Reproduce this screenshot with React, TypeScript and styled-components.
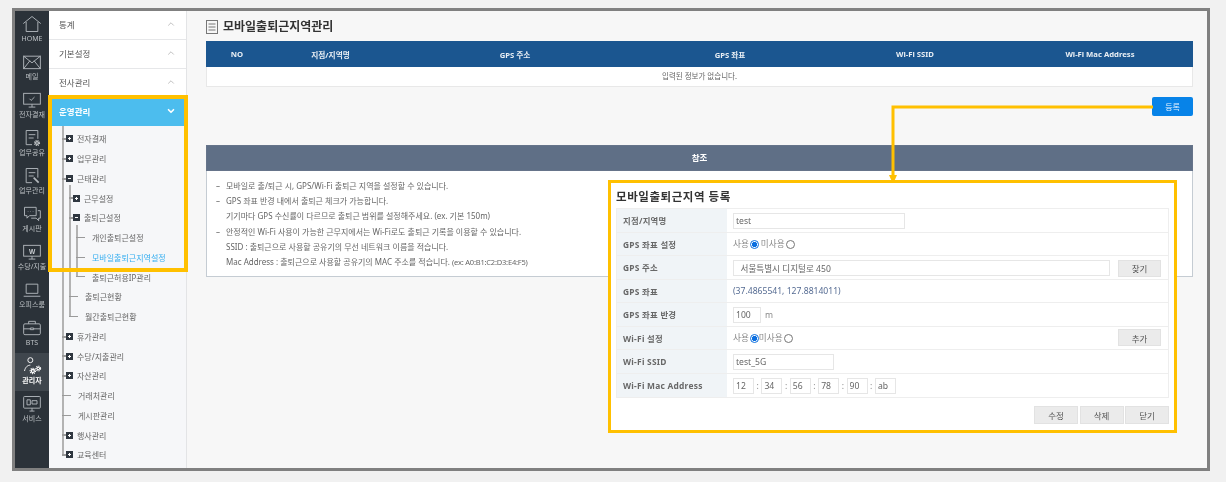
import React from 'react';
import styled, { createGlobalStyle } from 'styled-components';
import { ChevronDown, ChevronUp } from 'lucide-react';

const GlobalStyle = createGlobalStyle`
  html, body {
    margin: 0;
    padding: 0;
    background: #f1f1f1;
  }
  * {
    box-sizing: border-box;
  }
  body {
    font-family: "Noto Sans", "Noto Sans CJK KR", sans-serif;
    color: #555;
  }
`;

const Frame = styled.div`
  position: relative;
  display: flex;
  width: 1198px;
  height: 463px;
  margin: 8px 0 0 12px;
  border: 3px solid #808080;
  background: #f7f7f7;
  overflow: hidden;
  filter: blur(0.25px);
`;

const Rail = styled.nav`
  flex: 0 0 34px;
  background: #2b3239;
`;

const RailItem = styled.div<{ $active?: boolean }>`
  height: 38px;
  padding-top: 3px;
  display: flex;
  flex-direction: column;
  align-items: center;
  background: ${(props) => (props.$active ? '#3f464d' : 'transparent')};
  color: ${(props) => (props.$active ? '#ffffff' : '#bcc0c4')};
  font-size: 7px;
  line-height: 10px;
  font-weight: ${(props) => (props.$active ? 700 : 400)};
  white-space: nowrap;
  svg {
    display: block;
    width: 20px;
    height: 20px;
    fill: none;
    stroke: ${(props) => (props.$active ? '#ffffff' : '#b4b9be')};
    stroke-width: 1.1;
  }
`;

const IconLetter = styled.text`
  font: 700 8px "Liberation Sans", sans-serif;
  fill: #c8ccd0;
  stroke: none;
`;

const Sidebar = styled.aside`
  flex: 0 0 138px;
  background: #f6f7f9;
  border-right: 1px solid #e3e4e6;
`;

const Section = styled.div<{ $open?: boolean }>`
  height: ${(props) => (props.$open ? '28px' : '29px')};
  padding: 0 10px 2px 10px;
  display: flex;
  align-items: center;
  justify-content: space-between;
  font-size: 8.5px;
  font-weight: ${(props) => (props.$open ? 700 : 400)};
  color: ${(props) => (props.$open ? '#ffffff' : '#555')};
  background: ${(props) => (props.$open ? '#4cbdee' : '#ffffff')};
  border-bottom: ${(props) => (props.$open ? '0' : '1px solid #e6e7e9')};
  svg {
    color: ${(props) => (props.$open ? '#ffffff' : '#b5b5b5')};
  }
`;

const Tree = styled.ul<{ $level: number }>`
  list-style: none;
  margin: ${(props) => (props.$level === 1 ? '3px 0 0 13px' : '0 0 0 7px')};
  padding: 0;
`;

const Node = styled.li`
  position: relative;
  &::before {
    content: '';
    position: absolute;
    left: 0;
    top: -3px;
    bottom: 0;
    width: 2px;
    background: #b3b3b3;
  }
  &:last-child::before {
    bottom: auto;
    height: 13px;
  }
`;

const Row = styled.div<{ $current?: boolean; $leaf?: boolean }>`
  position: relative;
  height: 19.75px;
  display: flex;
  align-items: center;
  padding-left: ${(props) => (props.$leaf ? '16px' : '4px')};
  gap: 4px;
  font-size: 8px;
  white-space: nowrap;
  color: ${(props) => (props.$current ? '#35aef0' : '#666')};
  &::before {
    content: '';
    position: absolute;
    left: 0;
    top: 9px;
    height: ${(props) => (props.$leaf ? '1px' : '2px')};
    width: ${(props) => (props.$leaf ? '9px' : '4px')};
    background: #9a9a9a;
  }
`;

const Toggle = styled.span<{ $open?: boolean }>`
  flex: 0 0 7px;
  width: 7px;
  height: 7px;
  background-color: #2f3740;
  background-image: linear-gradient(#fff, #fff)
    ${(props) => (props.$open ? '' : ', linear-gradient(#fff, #fff)')};
  background-repeat: no-repeat;
  background-position: center;
  background-size: 3px 1px ${(props) => (props.$open ? '' : ', 1px 3px')};
`;

const Main = styled.main`
  flex: 1;
  min-width: 0;
  padding: 9px 14px 0 19px;
`;

const TitleRow = styled.div`
  display: flex;
  align-items: center;
  gap: 5px;
  height: 14px;
  margin-bottom: 7px;
`;

const PageTitle = styled.h1`
  margin: 0;
  padding-bottom: 2px;
  font-size: 12px;
  font-weight: 700;
  color: #333;
  white-space: nowrap;
`;

const TitleIcon = styled.svg`
  width: 12px;
  height: 14px;
  fill: none;
  stroke: #777;
  stroke-width: 1;
`;

const Grid = styled.div`
  display: grid;
  grid-template-columns: 62px 125px 244px 186px 184px 186px;
`;

const HeadRow = styled(Grid)`
  height: 26px;
  background: #1b5690;
  align-items: center;
  text-align: center;
  color: #e8eef4;
  font-size: 7.7px;
  font-weight: 700;
`;

const EmptyRow = styled.div`
  height: 20px;
  background: #fff;
  border: 1px solid #e8e8e8;
  border-top: 0;
  text-align: center;
  font-size: 7.5px;
  line-height: 19px;
  color: #666;
`;

const Actions = styled.div`
  display: flex;
  justify-content: flex-end;
  margin-top: 10px;
`;

const PrimaryButton = styled.button`
  width: 41px;
  height: 19px;
  padding: 0;
  border: 0;
  border-radius: 2px;
  background: #0783e8;
  color: #eaf5ff;
  font: 400 8px "Noto Sans CJK KR", sans-serif;
`;

const NoticeHead = styled.div`
  margin-top: 29px;
  height: 26px;
  background: #5f6f86;
  border: 1px solid #66748a;
  color: #fff;
  font-size: 8.5px;
  font-weight: 700;
  line-height: 23px;
  text-align: center;
`;

const NoticeBody = styled.ul`
  list-style: none;
  margin: 0;
  padding: 7px 0 0 9px;
  height: 106px;
  background: #fff;
  border: 1px solid #c5ccd3;
  border-top: 0;
  font-size: 8px;
  color: #666;
`;

const NoticeLine = styled.li<{ $first?: boolean }>`
  height: 15.2px;
  line-height: 15px;
  padding-left: 10px;
  position: relative;
  white-space: nowrap;
  &::before {
    content: ${(props) => (props.$first ? "'–'" : 'none')};
    position: absolute;
    left: 0;
  }
`;

const Hint = styled.span`
  font-size: 7.5px;
  letter-spacing: -0.2px;
`;

const Highlight = styled.div`
  position: absolute;
  left: 33px;
  top: 84px;
  width: 140px;
  height: 177px;
  border: 4px solid #ffc000;
  pointer-events: none;
`;

const Connector = styled.svg`
  position: absolute;
  left: 873px;
  top: 93px;
  width: 265px;
  height: 80px;
  overflow: visible;
`;

const Dialog = styled.section`
  position: absolute;
  left: 593px;
  top: 169px;
  width: 569px;
  height: 253px;
  padding: 0 5px;
  background: #fff;
  border: 3px solid #ffc000;
`;

const DialogTitle = styled.h2`
  margin: 0;
  height: 25px;
  font-size: 11.5px;
  line-height: 27px;
  font-weight: 700;
  letter-spacing: 0.55px;
  color: #333;
`;

const FormTable = styled.div`
  height: 190px;
  display: grid;
  grid-template-rows: repeat(8, 1fr);
  border: 1px solid #eeeeee;
`;

const FormRow = styled.div`
  display: grid;
  grid-template-columns: 110px 1fr;
  border-bottom: 1px solid #eeeeee;
  &:last-child {
    border-bottom: 0;
  }
`;

const FormLabel = styled.div`
  display: flex;
  align-items: center;
  padding-left: 6px;
  background: #f0f4f7;
  font-size: 8.4px;
  letter-spacing: 0.25px;
  font-weight: 700;
  color: #686868;
  white-space: nowrap;
`;

const FormValue = styled.div<{ $field?: boolean }>`
  display: flex;
  align-items: center;
  padding: ${(props) => (props.$field ? '2px' : '0')} 7px 0 6px;
  font-size: 8.6px;
  color: #8a8a8a;
`;

const TextInput = styled.input<{ $width: number; $blurred?: boolean }>`
  flex: 0 0 auto;
  width: ${(props) => props.$width}px;
  height: 16px;
  padding: 0 2px;
  border: 1px solid #e6e6e6;
  outline: none;
  font: 400 8.6px "Noto Sans", "Noto Sans CJK KR", sans-serif;
  color: #666;
  filter: ${(props) => (props.$blurred ? 'blur(0.6px)' : 'none')};
`;

const Radio = styled.input<{ $tight?: boolean }>`
  appearance: none;
  width: 9px;
  height: 9px;
  margin: 2px ${(props) => (props.$tight ? '0' : '2px')} 0 1px;
  border: 1px solid #767676;
  border-radius: 50%;
  background: #fff;
  &:checked {
    border-color: #0b6fe0;
    background: radial-gradient(circle, #0b6fe0 0 2.4px, #fff 2.9px);
  }
`;

const GrayButton = styled.button`
  width: 43px;
  height: 17px;
  padding: 0;
  border: 1px solid #e2e2e2;
  background: #ebebeb;
  color: #555;
  font: 400 8.5px "Noto Sans CJK KR", sans-serif;
`;

const PushRight = styled.div`
  margin-left: auto;
`;

const AddressGap = styled.div`
  flex: 1;
  display: flex;
  justify-content: flex-end;
`;

const Coordinates = styled.span`
  color: #566c93;
  filter: blur(0.7px);
`;

const Colon = styled.span`
  width: 7.4px;
  text-align: center;
`;

const DialogActions = styled.div`
  display: flex;
  justify-content: flex-end;
  gap: 1.5px;
  margin-top: 8px;
  button {
    width: 44px;
    height: 18px;
  }
`;

const Unit = styled.span`
  margin-left: 4px;
`;

function Gear({ x, y, r, color }: { x: number; y: number; r: number; color: string }) {
  return (
    <>
      <circle cx={x} cy={y} r={r} fill={color} stroke="none" />
      <circle cx={x} cy={y} r={r + 0.6} fill="none" stroke={color} strokeWidth="1.4" strokeDasharray="1.3 1.1" />
      <circle cx={x} cy={y} r={r * 0.4} fill="#2b3239" stroke="none" />
    </>
  );
}

const icons: Record<string, React.ReactNode> = {
  home: <path d="M1.5 11.5 12 3l10.5 8.5M5 9.5V21h14V9.500" />,
  mail: (
    <>
      <rect x="2" y="5" width="20" height="15" />
      <path d="m2 5 10 8 10-8M2 20l7.500-9.500M22 20l-7.500-9.500" />
    </>
  ),
  approval: (
    <>
      <rect x="2" y="4" width="20" height="13" />
      <path d="M8 20.500h8M12 17v3.500M9 10.500l2 2 4-4" />
    </>
  ),
  share: (
    <>
      <path d="M12 20H5V3h14v10M8 8h8M8 12h6" />
      <Gear x={18} y={18} r={2.4} color="#c6cacd" />
    </>
  ),
  work: (
    <>
      <path d="M12 20H5V3h14v11M8 8h8M8 12h6" />
      <path d="m14 14 6 6" strokeWidth="2" />
    </>
  ),
  board: (
    <>
      <path d="M3 4h14v10H9l-3 3v-3H3z" />
      <path d="M19 8h3v9h-2v3l-3-3h-6M7 9h.5M10 9h.5M13 9h.5" />
    </>
  ),
  pay: (
    <>
      <rect x="2" y="4" width="20" height="13" />
      <path d="M8 20.500h8M12 17v3.500" />
      <IconLetter x="8.500" y="14">W</IconLetter>
    </>
  ),
  office: <path d="M5 5h14v11H5zM2 19.500h20" />,
  bts: (
    <>
      <rect x="2" y="7" width="20" height="13" rx="1.500" />
      <path d="M8 7V4h8v3M2 13h8M14 13h8M10 12h4v2h-4z" />
    </>
  ),
  admin: (
    <>
      <circle cx="10" cy="5" r="3" />
      <path d="M3 18c1-5 4-7 7-7" />
      <Gear x={13} y={18} r={2.6} color="#fff" />
      <Gear x={19.500} y={15} r={2.2} color="#fff" />
    </>
  ),
  service: (
    <>
      <rect x="2" y="3" width="20" height="14" rx="1" />
      <path d="M9 20.500h6M12 17v3.500M6 7h4v6H6zM12 8h6v4h-6z" />
    </>
  ),
};

const railItems = [
  { icon: 'home', label: 'HOME' },
  { icon: 'mail', label: '메일' },
  { icon: 'approval', label: '전자결재' },
  { icon: 'share', label: '업무공유' },
  { icon: 'work', label: '업무관리' },
  { icon: 'board', label: '게시판' },
  { icon: 'pay', label: '수당/지출' },
  { icon: 'office', label: '오피스룸' },
  { icon: 'bts', label: 'BTS' },
  { icon: 'admin', label: '관리자', active: true },
  { icon: 'service', label: '서비스' },
];

type TreeItem = {
  label: string;
  mark?: '+' | '-';
  current?: boolean;
  children?: TreeItem[];
};

const tree: TreeItem[] = [
  { label: '전자결재', mark: '+' },
  { label: '업무관리', mark: '+' },
  {
    label: '근태관리',
    mark: '-',
    children: [
      { label: '근무설정', mark: '+' },
      {
        label: '출퇴근설정',
        mark: '-',
        children: [
          { label: '개인출퇴근설정' },
          { label: '모바일출퇴근지역설정', current: true },
          { label: '출퇴근허용IP관리' },
        ],
      },
      { label: '출퇴근현황' },
      { label: '월간출퇴근현황' },
    ],
  },
  { label: '휴가관리', mark: '+' },
  { label: '수당/지출관리', mark: '+' },
  { label: '자산관리', mark: '+' },
  { label: '거래처관리' },
  { label: '게시판관리' },
  { label: '행사관리', mark: '+' },
  { label: '교육센터', mark: '+' },
];

function TreeBranch({ items, level }: { items: TreeItem[]; level: number }) {
  return (
    <Tree $level={level}>
      {items.map((item) => (
        <Node key={item.label}>
          <Row $leaf={!item.mark} $current={item.current}>
            {item.mark && <Toggle $open={item.mark === '-'} />}
            {item.label}
          </Row>
          {item.children && <TreeBranch items={item.children} level={level + 1} />}
        </Node>
      ))}
    </Tree>
  );
}

const notices = [
  { text: '모바일로 출/퇴근 시, GPS/Wi-Fi 출퇴근 지역을 설정할 수 있습니다.', first: true },
  { text: 'GPS 좌표 반경 내에서 출퇴근 체크가 가능합니다.', first: true },
  { text: '기기마다 GPS 수신률이 다르므로 출퇴근 범위를 설정해주세요. (ex. 기본 150m)' },
  { text: '안정적인 Wi-Fi 사용이 가능한 근무지에서는 Wi-Fi로도 출퇴근 기록을 이용할 수 있습니다.', first: true },
  { text: 'SSID : 출퇴근으로 사용할 공유기의 무선 네트워크 이름을 적습니다.' },
  { text: 'Mac Address : 출퇴근으로 사용할 공유기의 MAC 주소를 적습니다. ', hint: '(ex: A0:B1:C2:D3:E4:F5)' },
];

const macParts = ['12', '34', '56', '78', '90', 'ab'];

function App() {
  return (
    <>
      <GlobalStyle />
      <Frame>
        <Rail>
          {railItems.map((item) => (
            <RailItem key={item.label} $active={item.active}>
              <svg viewBox="0 0 24 24">{icons[item.icon]}</svg>
              {item.label}
            </RailItem>
          ))}
        </Rail>

        <Sidebar>
          {['통계', '기본설정', '전사관리'].map((name) => (
            <Section key={name}>
              {name}
              <ChevronUp size={10} />
            </Section>
          ))}
          <Section $open>
            운영관리
            <ChevronDown size={10} strokeWidth={4} />
          </Section>
          <TreeBranch items={tree} level={1} />
        </Sidebar>

        <Main>
          <TitleRow>
            <TitleIcon viewBox="0 0 12 14">
              <rect x="0.5" y="0.5" width="11" height="13" />
              <path d="M2.5 4h7M2.5 7h7M2.5 10h7" />
            </TitleIcon>
            <PageTitle>모바일출퇴근지역관리</PageTitle>
          </TitleRow>

          <HeadRow>
            <span>NO</span>
            <span>지점/지역명</span>
            <span>GPS 주소</span>
            <span>GPS 좌표</span>
            <span>Wi-Fi SSID</span>
            <span>Wi-Fi Mac Address</span>
          </HeadRow>
          <EmptyRow>입력된 정보가 없습니다.</EmptyRow>

          <Actions>
            <PrimaryButton>등록</PrimaryButton>
          </Actions>

          <NoticeHead>참조</NoticeHead>
          <NoticeBody>
            {notices.map((line) => (
              <NoticeLine key={line.text} $first={line.first}>
                {line.text}
                {line.hint && <Hint>{line.hint}</Hint>}
              </NoticeLine>
            ))}
          </NoticeBody>
        </Main>

        <Highlight />

        <Connector viewBox="0 0 265 80">
          <path d="M265 3H5V72" fill="none" stroke="#ffc000" strokeWidth="3" />
          <path d="M1 71h8l-4 9z" fill="#ffc000" />
        </Connector>

        <Dialog>
          <DialogTitle>모바일출퇴근지역 등록</DialogTitle>
          <FormTable>
            <FormRow>
              <FormLabel>지점/지역명</FormLabel>
              <FormValue $field>
                <TextInput $width={172} defaultValue="test" />
              </FormValue>
            </FormRow>
            <FormRow>
              <FormLabel>GPS 좌표 설정</FormLabel>
              <FormValue>
                사용
                <Radio type="radio" name="gps" defaultChecked />
                미사용
                <Radio type="radio" name="gps" />
              </FormValue>
            </FormRow>
            <FormRow>
              <FormLabel>GPS 주소</FormLabel>
              <FormValue $field>
                <TextInput $width={377} defaultValue="  서울특별시 디지털로 450" />
                <AddressGap>
                  <GrayButton>찾기</GrayButton>
                </AddressGap>
              </FormValue>
            </FormRow>
            <FormRow>
              <FormLabel>GPS 좌표</FormLabel>
              <FormValue>
                <Coordinates>(37.4865541, 127.8814011)</Coordinates>
              </FormValue>
            </FormRow>
            <FormRow>
              <FormLabel>GPS 좌표 반경</FormLabel>
              <FormValue $field>
                <TextInput $width={28} defaultValue="100" />
                <Unit>m</Unit>
              </FormValue>
            </FormRow>
            <FormRow>
              <FormLabel>Wi-Fi 설정</FormLabel>
              <FormValue>
                사용
                <Radio type="radio" name="wifi" defaultChecked $tight />
                미사용
                <Radio type="radio" name="wifi" />
                <PushRight>
                  <GrayButton>추가</GrayButton>
                </PushRight>
              </FormValue>
            </FormRow>
            <FormRow>
              <FormLabel>Wi-Fi SSID</FormLabel>
              <FormValue $field>
                <TextInput $width={101} defaultValue="test_5G" />
              </FormValue>
            </FormRow>
            <FormRow>
              <FormLabel>Wi-Fi Mac Address</FormLabel>
              <FormValue $field>
                {macParts.map((part, index) => (
                  <React.Fragment key={part}>
                    {index > 0 && <Colon>:</Colon>}
                    <TextInput $width={21} defaultValue={part} $blurred={index > 2} />
                  </React.Fragment>
                ))}
              </FormValue>
            </FormRow>
          </FormTable>
          <DialogActions>
            <GrayButton>수정</GrayButton>
            <GrayButton>삭제</GrayButton>
            <GrayButton>닫기</GrayButton>
          </DialogActions>
        </Dialog>
      </Frame>
    </>
  );
}

export default App;
